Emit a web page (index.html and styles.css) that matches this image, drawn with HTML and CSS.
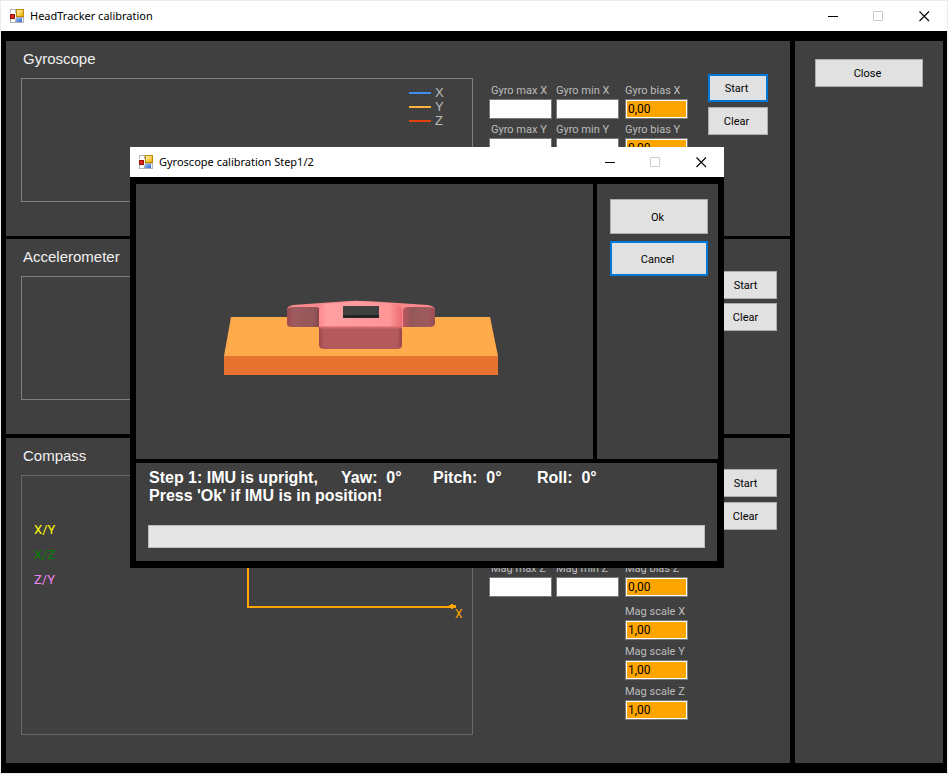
FILE: index.html
```html
<!DOCTYPE html>
<html lang="en">
<head>
<meta charset="utf-8">
<title>HeadTracker calibration</title>
<link rel="stylesheet" href="styles.css">
</head>
<body>
<svg class="defs" width="0" height="0" aria-hidden="true">
  <defs>
    <linearGradient id="gy" x1="0" y1="0" x2="1" y2="1"><stop offset="0" stop-color="#fff0b0"/><stop offset="1" stop-color="#f0b000"/></linearGradient>
    <linearGradient id="gb" x1="0" y1="0" x2="1" y2="1"><stop offset="0" stop-color="#9cc4fa"/><stop offset="1" stop-color="#2b66cc"/></linearGradient>
    <symbol id="app" viewBox="0 0 14 14">
      <rect width="14" height="14" fill="#b4b4b4"/>
      <path d="M1 1h4v3H1zM1 10h4v3H1zM12 9h1v4h-1z" fill="#fff"/>
      <rect x="0" y="4" width="6" height="6" fill="#fff"/>
      <rect x="0.500" y="5.500" width="4" height="4" fill="#d4291c" stroke="#a01208"/>
      <rect x="6" y="0" width="8" height="8" fill="#c08a00"/>
      <rect x="7" y="1" width="6" height="6" fill="url(#gy)"/>
      <rect x="6" y="9" width="6" height="4" fill="url(#gb)"/>
    </symbol>
    <symbol id="min" viewBox="0 0 11 11"><path d="M1 5.5h10" stroke="#000"/></symbol>
    <symbol id="max" viewBox="0 0 11 11"><path d="M.5.5h9v9h-9z" fill="none" stroke="#ccc"/></symbol>
    <symbol id="cls" viewBox="0 0 11 11"><path d="M.5.5l9.500 9.500M10 .5l-9.500 9.500" stroke="#000" stroke-width="1.1"/></symbol>
  </defs>
</svg>

<div class="window">
  <header class="titlebar">
    <svg class="appicon" aria-hidden="true"><use href="#app"/></svg>
    <h1>HeadTracker calibration</h1>
    <button class="ctl" aria-label="Minimize"><svg><use href="#min"/></svg></button>
    <button class="ctl" aria-label="Maximize" disabled><svg><use href="#max"/></svg></button>
    <button class="ctl" aria-label="Close window"><svg><use href="#cls"/></svg></button>
  </header>
  <div class="content">
    <main class="sections">
      <section class="section">
        <div class="plot">
          <h2>Gyroscope</h2>
          <div class="chart">
            <ul class="legend">
              <li><span class="line blue"></span>X</li>
              <li><span class="line amber"></span>Y</li>
              <li><span class="line red"></span>Z</li>
            </ul>
          </div>
        </div>
        <div class="fields">
          <label class="value">Gyro max X<input type="text"></label>
          <label>Gyro min X<input type="text"></label>
          <label>Gyro bias X<input type="text" class="set" value="0,00"></label>
          <label class="value">Gyro max Y<input type="text"></label>
          <label>Gyro min Y<input type="text"></label>
          <label>Gyro bias Y<input type="text" class="set" value="0,00"></label>
        </div>
        <div class="actions">
          <button class="btn focus">Start</button>
          <button class="btn">Clear</button>
        </div>
      </section>

      <section class="section accel">
        <div class="plot">
          <h2>Accelerometer</h2>
          <div class="chart"></div>
        </div>
        <div class="fields"></div>
        <div class="actions shifted">
          <button class="btn">Start</button>
          <button class="btn">Clear</button>
        </div>
      </section>

      <section class="section compass">
        <div class="plot">
          <h2>Compass</h2>
          <div class="chart map">
            <ul class="planes">
              <li class="xy">X/Y</li>
              <li class="xz">X/Z</li>
              <li class="zy">Z/Y</li>
            </ul>
            <svg class="axes" width="226" height="258" viewBox="0 0 226 258" role="img" aria-label="Axes">
              <path d="M2 20V130H207" fill="none" stroke="#ffa500" stroke-width="2"/>
              <path d="M203 128h2v-1h2v1h3v3h-3v1h-2v-1h-2z" fill="#ffa500"/>
              <text x="209" y="141">X</text>
            </svg>
          </div>
        </div>
        <div class="fields">
          <label class="value">Mag max Z<input type="text"></label>
          <label>Mag min Z<input type="text"></label>
          <label>Mag bias Z<input type="text" class="set" value="0,00"></label>
          <div class="scale">
            <label>Mag scale X<input type="text" class="set" value="1,00"></label>
            <label>Mag scale Y<input type="text" class="set" value="1,00"></label>
            <label>Mag scale Z<input type="text" class="set" value="1,00"></label>
          </div>
        </div>
        <div class="actions shifted">
          <button class="btn">Start</button>
          <button class="btn">Clear</button>
        </div>
      </section>
    </main>
    <aside class="side"><button class="btn">Close</button></aside>
  </div>
</div>

<div class="dialog" role="dialog" aria-labelledby="dlg">
  <header class="titlebar">
    <svg class="appicon" aria-hidden="true"><use href="#app"/></svg>
    <h1 id="dlg">Gyroscope calibration Step1/2</h1>
    <button class="ctl" aria-label="Minimize"><svg><use href="#min"/></svg></button>
    <button class="ctl" aria-label="Maximize" disabled><svg><use href="#max"/></svg></button>
    <button class="ctl" aria-label="Close dialog"><svg><use href="#cls"/></svg></button>
  </header>
  <div class="panes">
    <div class="view">
      <svg width="276" height="76" viewBox="0 0 276 76" role="img" aria-label="IMU model, upright">
        <defs>
          <linearGradient id="wing"><stop offset="0" stop-color="#9c4a4f"/><stop offset=".2" stop-color="#9d5b5f"/><stop offset=".8" stop-color="#95575a"/><stop offset="1" stop-color="#84444a"/></linearGradient>
          <linearGradient id="wing2"><stop offset="0" stop-color="#b9585d"/><stop offset=".25" stop-color="#95575a"/><stop offset=".8" stop-color="#9d5b5f"/><stop offset="1" stop-color="#9c4a4f"/></linearGradient>
          <linearGradient id="front"><stop offset="0" stop-color="#9c474c"/><stop offset=".06" stop-color="#b45a5c"/><stop offset=".94" stop-color="#b45a5c"/><stop offset="1" stop-color="#96454a"/></linearGradient>
          <linearGradient id="top"><stop offset="0" stop-color="#ff8a8d"/><stop offset=".1" stop-color="#ff9fa1"/><stop offset=".85" stop-color="#ff9698"/><stop offset="1" stop-color="#ea6d73"/></linearGradient>
        </defs>
        <path d="M8 17H267L275 56H1z" fill="#ffab4b"/>
        <path d="M1 56H275V75H1z" fill="#e67330"/>
        <path d="M64 9Q65 6 70 5L112 2Q136 0 137 1Q141 1 160 2L205 5Q211 6 212 9L206 10H180V27H97V10H69z" fill="#f9888c"/>
        <path d="M64 9Q66 7 71 7H93Q96 7 97 10V27H69Q64 27 64 24z" fill="url(#wing)"/>
        <path d="M180 10Q181 7 185 7H206Q211 7 212 9V24Q211 27 207 27H180z" fill="url(#wing2)"/>
        <path d="M101 4L137 1L174 4Q179 6 179 10V28H96V10Q97 5 101 4z" fill="url(#top)"/>
        <path d="M96 27H179V46Q178 49 174 49H101Q96 49 96 45z" fill="url(#front)"/>
        <path d="M97 27.500H179" stroke="#d4686d" stroke-width="2"/>
        <rect x="120" y="6" width="36" height="12" fill="#404040"/>
        <rect x="120" y="15" width="36" height="3" fill="#242424"/>
      </svg>
    </div>
    <div class="choices">
      <button class="btn">Ok</button>
      <button class="btn focus">Cancel</button>
    </div>
    <div class="status">
      <p class="row"><span class="step">Step 1: IMU is upright,</span><span class="yaw">Yaw:&nbsp; 0°</span><span class="pitch">Pitch:&nbsp; 0°</span><span>Roll:&nbsp; 0°</span></p>
      <p>Press 'Ok' if IMU is in position!</p>
      <div class="progress" role="progressbar" aria-label="Calibration progress" aria-valuenow="0"></div>
    </div>
  </div>
</div>
</body>
</html>
```
FILE: styles.css
```css
* { box-sizing: border-box; }

body {
  margin: 0;
  min-height: 100vh;
  padding: 1px;
  background: #ececec;
  color: #f0f0f0;
  font: 11px/18px Roboto, "Liberation Sans", sans-serif;
}

h1, h2, p, ul { margin: 0; padding: 0; }
ul { list-style: none; }
.defs { position: absolute; }

.window {
  min-height: calc(100vh - 2px);
  display: flex;
  flex-direction: column;
  background: #000;
}

.titlebar {
  display: flex;
  align-items: center;
  height: 30px;
  padding-left: 9px;
  background: #fff;
  color: #000;
}
.titlebar h1 {
  flex: 1;
  font: 11px/18px "Noto Sans", sans-serif;
}
.appicon { width: 14px; height: 14px; margin-right: 6px; }
.ctl {
  display: flex;
  align-items: center;
  justify-content: center;
  width: 46px;
  height: 30px;
  padding: 0;
  border: 0;
  background: none;
}
.ctl svg { width: 11px; height: 11px; }

.content {
  flex: 1;
  display: flex;
  gap: 5px;
  padding: 10px 4px 10px 5px;
}
.sections { flex: 1; display: flex; flex-direction: column; }
.section {
  display: flex;
  background: #404040;
  padding-left: 15px;
  margin-bottom: 3px;
}
.accel { margin-bottom: 4px; }
.compass { flex: 1; margin: 0; }

.plot { flex: 1; padding: 9px 0 34px; }
.compass .plot { padding-bottom: 28px; }
.plot h2 {
  font: 15px/18px "Liberation Sans", sans-serif;
  margin: 0 2px 10px;
}
.chart { height: 124px; border: 1px solid #808080; color: #bdbdbd; }
.legend {
  width: 63px;
  margin-left: auto;
  padding-top: 7px;
  font: 13px/14px "Liberation Sans", sans-serif;
}
.legend li { display: flex; align-items: center; gap: 4px; }
.line { width: 22px; height: 2px; }
.blue { background: #418cf0; }
.amber { background: #fcb441; }
.red { background: #e0400a; }

.map {
  display: flex;
  justify-content: space-between;
  height: 260px;
  border-color: #696969;
}
.planes { padding: 41px 0 0 12px; font-size: 13px; line-height: 25px; }
.xy { color: #ff0; }
.xz { color: #008000; }
.zy { color: #ee82ee; }
.axes { margin-top: 1px; }
.axes text { fill: #ffa500; font-size: 12px; }

.fields {
  display: grid;
  grid-template-columns: 67px 69px 63px;
  align-content: start;
  row-gap: 1px;
  width: 199px;
  margin-left: 16px;
  padding-top: 40px;
  color: #bdbdbd;
}
.fields label { line-height: 20px; white-space: nowrap; }
.fields .value { text-indent: 2px; }
.fields input {
  display: block;
  width: 63px;
  height: 20px;
  margin-top: -2px;
  padding: 0 2px;
  border: 1px solid #7a7a7a;
  background: #fff;
  color: #000;
  font: 12px/18px Roboto, "Liberation Sans", sans-serif;
}
.fields .set {
  background: #ffa500;
  box-shadow: inset 0 0 0 1px #fff;
}
.compass .fields {
  align-content: end;
  row-gap: 2px;
  padding: 0 0 43px;
}
.scale {
  grid-column: 3;
  display: grid;
  row-gap: 2px;
  margin-top: 3px;
}

.actions {
  display: flex;
  flex-direction: column;
  gap: 5px;
  width: 102px;
  padding: 33px 22px 0 20px;
}
.shifted { padding: 32px 13px 0 29px; }
.accel .actions { gap: 4px; }
.compass .actions { padding-top: 31px; }

.btn {
  display: block;
  height: 28px;
  padding: 2px 3px 0 0;
  border: 1px solid #adadad;
  background: #e1e1e1;
  color: #000;
  font: inherit;
}
.focus { border: 2px solid #0078d7; }

.side { width: 148px; padding: 18px 20px; background: #404040; }
.side .btn { width: 100%; }

.dialog {
  position: absolute;
  left: 130px;
  top: 147px;
  width: 594px;
  background: #000;
}
.panes {
  display: grid;
  grid-template-columns: 1fr 121px;
  gap: 4px;
  padding: 7px 6px;
}
.view, .choices, .status { background: #404040; }
.view {
  display: flex;
  justify-content: center;
  height: 275px;
  padding: 116px 8px 0 0;
}
.choices {
  display: flex;
  flex-direction: column;
  gap: 7px;
  padding: 15px 10px 0 13px;
}
.choices .btn { height: 35px; }
.status {
  grid-column: 1 / -1;
  margin-right: 1px;
  padding: 6px 12px 13px;
  color: #fff;
  font: bold 16px/18px "Liberation Sans", sans-serif;
}
.status p { padding-left: 1px; white-space: nowrap; }
.row { display: flex; }
.step { width: 192px; }
.yaw { width: 92px; }
.pitch { width: 104px; }
.progress {
  height: 23px;
  margin-top: 20px;
  border: 1px solid #bcbcbc;
  background: #e6e6e6;
}
```
